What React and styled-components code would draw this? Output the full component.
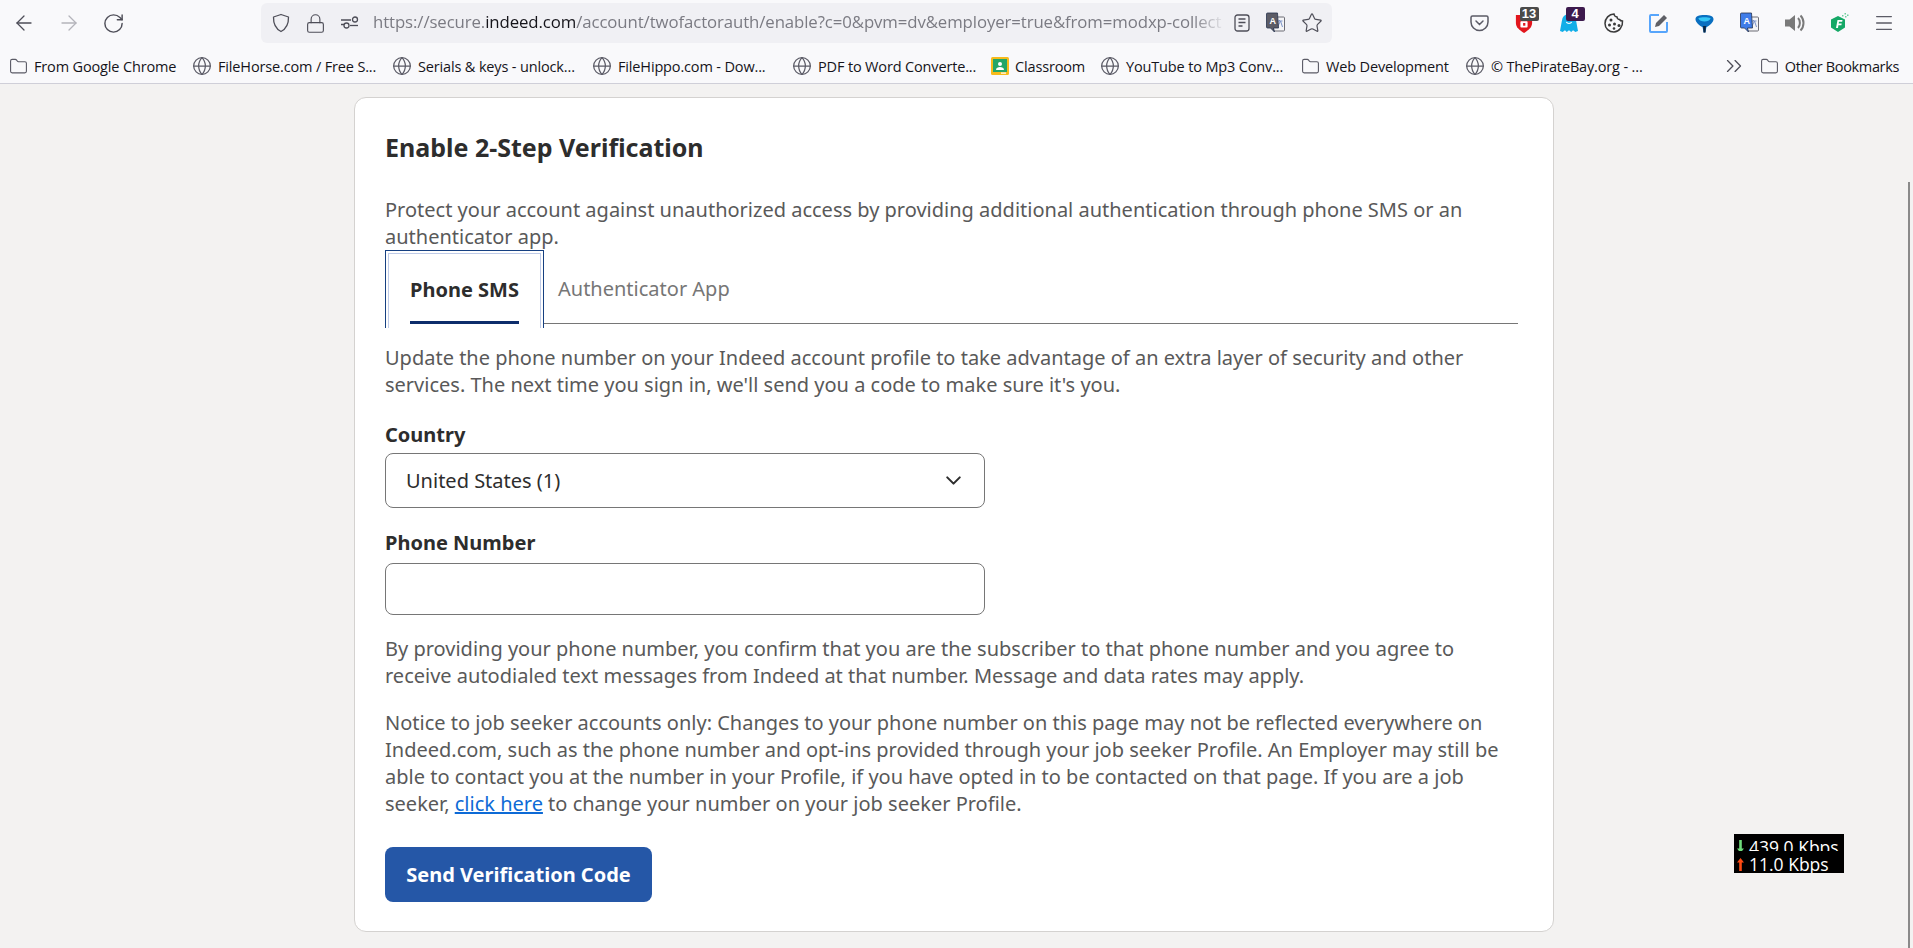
import React from "react"
import styled, { createGlobalStyle } from "styled-components"
import { ChevronDown, ChevronsRight, Folder, Globe, Lock, Menu, RotateCw, ArrowLeft, ArrowRight, Star } from "lucide-react"

const GlobalStyle = createGlobalStyle`
  html, body {
    margin: 0;
    padding: 0;
    height: 100%;
    overflow: hidden;
    background: #f3f2f1;
  }
  * { box-sizing: border-box; }
`

const bookmarks = [
  { label: "From Google Chrome", icon: "folder", width: 183 },
  { label: "FileHorse.com / Free S...", icon: "globe", width: 200 },
  { label: "Serials & keys - unlock...", icon: "globe", width: 200 },
  { label: "FileHippo.com - Dow...", icon: "globe", width: 200 },
  { label: "PDF to Word Converte...", icon: "globe", width: 199 },
  { label: "Classroom", icon: "classroom", width: 109 },
  { label: "YouTube to Mp3 Conv...", icon: "globe", width: 201 },
  { label: "Web Development", icon: "folder", width: 164 },
  { label: "© ThePirateBay.org - ...", icon: "globe", width: 200 },
]

function ClassroomIcon() {
  return (
    <svg width="18" height="18" viewBox="0 0 18 18">
      <rect width="18" height="18" rx="1.5" fill="#f7bb1b" />
      <rect x="2" y="2" width="14" height="13" fill="#25a667" />
      <circle cx="9" cy="7" r="2" fill="#fff" />
      <path d="M5 13c0-2.2 2-3 4-3s4 .8 4 3z" fill="#fff" />
      <rect x="10" y="15.5" width="5" height="1.2" fill="#fff" />
    </svg>
  )
}

function BookmarkIcon({ kind }) {
  if (kind === "folder") return <Folder size={19} strokeWidth={1.4} color="#5b5b66" />
  if (kind === "classroom") return <ClassroomIcon />
  return <Globe size={20} strokeWidth={1.5} color="#5b5b66" />
}

function TranslateIcon({ color }) {
  return (
    <svg width="21" height="22" viewBox="0 0 20 22">
      <rect x="8" y="5" width="11" height="14" rx="1" fill="#f4f4f6" stroke="#6d6d75" />
      <path d="M11 9h6M14 8v1M12 15l3-6 2 6" fill="none" stroke="#7b93c8" strokeWidth="1" />
      <path d="M2 1h10l1 15H8l1 4-4-4H2a1 1 0 0 1-1-1V2a1 1 0 0 1 1-1z" fill={color} stroke="#27344f" strokeWidth=".8" />
      <text x="4" y="12" fontSize="9" fontWeight="700" fontFamily="Liberation Sans, sans-serif" fill="#fff">A</text>
    </svg>
  )
}

function SpeedGlyph({ color, up }) {
  return (
    <svg width="7" height="13" viewBox="0 0 7 13">
      <path d={up ? "M3.500 0L7 4.500H4.800V13H2.200V4.500H0z" : "M3.500 13L7 8.500H4.800V0H2.200V8.500H0z"} fill={color} />
    </svg>
  )
}

export default function App() {
  return (
    <>
      <GlobalStyle />
      <Browser>
        <NavBar>
          <NavButtons>
            <ArrowLeft size={24} strokeWidth={1.3} color="#4e4e58" />
            <ArrowRight size={24} strokeWidth={1.3} color="#b4b4ba" />
            <RotateCw size={23} strokeWidth={1.5} color="#4e4e58" />
          </NavButtons>
          <UrlBar>
            <UrlIcons>
              <svg width="20" height="20" viewBox="0 0 20 20" fill="none" stroke="#4e4e58" strokeWidth="1.3">
                <path d="M10 1.500l7.500 2.500c.2 6.500-1.800 11.500-7.500 14.500C4.300 15.500 2.300 10.500 2.500 4z" strokeLinejoin="round" />
              </svg>
              <Lock size={21} strokeWidth={1.3} color="#4e4e58" />
              <svg width="20" height="16" viewBox="0 0 20 16" fill="none" stroke="#4e4e58" strokeWidth="1.3">
                <path d="M1 5h10M1 9.500h3" />
                <circle cx="15" cy="4.500" r="2.500" />
                <circle cx="6.500" cy="10.500" r="2.500" />
                <path d="M10 10.500h8" />
              </svg>
            </UrlIcons>
            <UrlText>
              https://secure.<strong>indeed.com</strong>/account/twofactorauth/enable?c=0&amp;pvm=dv&amp;employer=true&amp;from=modxp-collect
            </UrlText>
            <UrlActions>
              <svg width="16" height="18" viewBox="0 0 16 18" fill="none" stroke="#4e4e58" strokeWidth="1.3">
                <rect x="1" y="1" width="14" height="16" rx="2.500" />
                <path d="M4.500 5h7M4.500 8.500h7M4.500 12h4" />
              </svg>
              <TranslateIcon color="#5c5c66" />
              <Star size={22} strokeWidth={1.3} color="#4e4e58" />
            </UrlActions>
          </UrlBar>
          <Extensions>
            <ExtensionSlot>
              <svg width="19" height="18" viewBox="0 0 19 18" fill="none" stroke="#5b5b66" strokeWidth="1.500">
                <path d="M2.500 2h14a1.500 1.500 0 0 1 1.500 1.500V8a8.500 8.500 0 0 1-17 0V3.500A1.500 1.500 0 0 1 2.500 2z" />
                <path d="M6 7l3.500 3.500L13 7" strokeLinecap="round" />
              </svg>
            </ExtensionSlot>
            <ExtensionSlot>
              <svg width="18" height="22" viewBox="0 0 20 22">
                <path d="M1 2h18v9c0 5-4 8-9 11-5-3-9-6-9-11z" fill="#e2161d" />
                <rect x="6" y="9" width="8" height="7" rx="1" fill="#fff" />
                <rect x="9" y="11" width="2.500" height="3" fill="#e2161d" />
              </svg>
              <Badge $bg="#4a4a4a" $left={18}>13</Badge>
            </ExtensionSlot>
            <ExtensionSlot>
              <svg width="18" height="22" viewBox="0 0 20 22">
                <path d="M2 9a8 8 0 0 1 16 0l2 11-3 1-2.500-2-2 2-2.500-2-2.500 2-2-2-2.500 2-3-1z" fill="#12aee8" />
                <path d="M7 10c1 2 5 2 6 0" fill="none" stroke="#fff" strokeWidth="1.200" />
              </svg>
              <Badge $bg="#3d1a4d" $left={19}>4</Badge>
            </ExtensionSlot>
            <ExtensionSlot>
              <svg width="20" height="20" viewBox="0 0 20 20">
                <path d="M10 1c.3 2 1.500 2.800 3 3 .2 1.500 1 2.500 2.500 2.500.6 1 1.500 1.500 3 1.500.6 5.500-3.500 11-8.500 11S1 15.500 1 10.500 5 1 10 1z" fill="none" stroke="#3a3a3a" strokeWidth="1.500" />
                <circle cx="7" cy="7" r="1.500" fill="#3a3a3a" />
                <circle cx="5.500" cy="12" r="1.500" fill="#3a3a3a" />
                <circle cx="10.500" cy="11" r="1.500" fill="#3a3a3a" />
                <circle cx="10" cy="15.500" r="1.300" fill="#3a3a3a" />
                <circle cx="15" cy="12.500" r="1.500" fill="#3a3a3a" />
              </svg>
            </ExtensionSlot>
            <ExtensionSlot>
              <svg width="20" height="20" viewBox="0 0 20 20">
                <path d="M10 2H2a1 1 0 0 0-1 1v15a1 1 0 0 0 1 1h15a1 1 0 0 0 1-1v-9" fill="none" stroke="#57a5fb" strokeWidth="2" />
                <path d="M6 14l1-4 8-8 3 3-8 8z" fill="#5f6066" />
              </svg>
            </ExtensionSlot>
            <ExtensionSlot>
              <svg width="19" height="19" viewBox="0 0 20 20">
                <path d="M0.500 5.500C0.500 2 4 1 10 1s9.500 1 9.500 4.500c0 3-4 6.500-7.500 8.500l-1 5.500H9L8 14C4.500 12 .5 8.500.5 5.500z" fill="#0a6fc0" />
                <path d="M3.500 4.500c3-1.300 10-1.300 13 0-1 2.300-3.500 3.500-6.500 3.500S4.500 6.800 3.500 4.500z" fill="#35c6f5" />
                <path d="M8.500 12.500h3l-.500 7H9z" fill="#0d2540" />
              </svg>
            </ExtensionSlot>
            <ExtensionSlot>
              <TranslateIcon color="#3f7ce8" />
            </ExtensionSlot>
            <ExtensionSlot>
              <svg width="21" height="20" viewBox="0 0 21 20" fill="#7a7a7a">
                <path d="M1 6.500h4.500L11 2v16l-5.500-4.500H1z" />
                <path d="M14 5c2.500 2.500 2.500 7.500 0 10M16.500 2.500c4 4 4 11 0 15" fill="none" stroke="#7a7a7a" strokeWidth="2" />
              </svg>
            </ExtensionSlot>
            <ExtensionSlot>
              <svg width="20" height="22" viewBox="0 0 20 22">
                <path d="M9 4l7 3.500v8L9 20l-7-4.500v-8z" fill="#15a866" />
                <path d="M7 16l1.500-8h5l-.3 1.800H10l-.3 1.700h3l-.3 1.700h-3L9 16z" fill="#fff" />
                <g fill="#6fcf9f">
                  <rect x="13" y="3" width="1.500" height="1.500" />
                  <rect x="15.500" y="1" width="1.500" height="1.500" />
                  <rect x="16" y="4" width="1.500" height="1.500" />
                  <rect x="18" y="2.500" width="1.500" height="1.500" />
                </g>
              </svg>
            </ExtensionSlot>
            <ExtensionSlot>
              <Menu size={22} strokeWidth={1.500} color="#5b5b66" />
            </ExtensionSlot>
          </Extensions>
        </NavBar>
        <BookmarkBar>
          {bookmarks.map((item) => (
            <BookmarkItem key={item.label} $width={item.width}>
              <BookmarkIcon kind={item.icon} />
              <span>{item.label}</span>
            </BookmarkItem>
          ))}
          <OverflowChevrons>
            <ChevronsRight size={26} strokeWidth={1.200} color="#4e4e58" />
          </OverflowChevrons>
          <BookmarkItem $tight>
            <BookmarkIcon kind="folder" />
            <span>Other Bookmarks</span>
          </BookmarkItem>
        </BookmarkBar>
      </Browser>

      <Page>
        <Card>
          <Title>Enable 2-Step Verification</Title>
          <Intro>
            Protect your account against unauthorized access by providing additional authentication through phone SMS or an authenticator app.
          </Intro>
          <TabList>
            <Tab $active>
              <TabLabel $active>Phone SMS</TabLabel>
            </Tab>
            <Tab>
              <TabLabel>Authenticator App</TabLabel>
            </Tab>
          </TabList>
          <TabIntro>
            Update the phone number on your Indeed account profile to take advantage of an extra layer of security and other services. The next time you sign in, we'll send you a code to make sure it's you.
          </TabIntro>
          <FieldLabel>Country</FieldLabel>
          <SelectBox>
            <span>United States (1)</span>
            <ChevronDown size={25} strokeWidth={2} color="#2d2d2d" />
          </SelectBox>
          <FieldLabel $second>Phone Number</FieldLabel>
          <TextInput type="text" />
          <Consent>
            By providing your phone number, you confirm that you are the subscriber to that phone number and you agree to receive autodialed text messages from Indeed at that number. Message and data rates may apply.
          </Consent>
          <Notice>
            Notice to job seeker accounts only: Changes to your phone number on this page may not be reflected everywhere on Indeed.com, such as the phone number and opt-ins provided through your job seeker Profile. An Employer may still be able to contact you at the number in your Profile, if you have opted in to be contacted on that page. If you are a job seeker, <ProfileLink href="#">click here</ProfileLink> to change your number on your job seeker Profile.
          </Notice>
          <SendButton>Send Verification Code</SendButton>
        </Card>
      </Page>

      <ScrollThumb />
      <SpeedWidget>
        <SpeedRow $height={17}>
          <SpeedArrow $top={6}><SpeedGlyph color="#6fdc7c" /></SpeedArrow>
          439.0 Kbps
        </SpeedRow>
        <SpeedRow $height={22}>
          <SpeedArrow $top={7}><SpeedGlyph color="#ff4a12" up /></SpeedArrow>
          11.0 Kbps
        </SpeedRow>
      </SpeedWidget>
    </>
  )
}

const Browser = styled.header`
  height: 84px;
  background: #f9f9fb;
  border-bottom: 1px solid #cfcfd8;
  font-family: "Open Sans", sans-serif;
`

const NavBar = styled.div`
  height: 48px;
  padding-top: 3px;
  display: flex;
  align-items: flex-start;
`

const NavButtons = styled.div`
  width: 261px;
  height: 40px;
  padding-left: 12px;
  display: flex;
  align-items: center;
  gap: 21px;
`

const UrlBar = styled.div`
  width: 1071px;
  height: 40px;
  padding: 0 10px;
  display: flex;
  align-items: center;
  background: #f0f0f4;
  border-radius: 6px;
`

const UrlIcons = styled.div`
  display: flex;
  align-items: center;
  gap: 14px;
  width: 102px;
  flex: none;
`

const UrlText = styled.div`
  width: 853px;
  flex: none;
  overflow: hidden;
  white-space: nowrap;
  font-size: 16.8px;
  letter-spacing: -0.1px;
  line-height: 38px;
  height: 40px;
  color: #7b7b83;
  -webkit-mask-image: linear-gradient(to right, #000 96%, transparent);
  mask-image: linear-gradient(to right, #000 96%, transparent);

  strong {
    font-weight: 400;
    color: #15141a;
  }
`

const UrlActions = styled.div`
  display: flex;
  align-items: center;
  gap: 15px;
  margin-left: 8px;
`

const Extensions = styled.div`
  margin-left: 124.5px;
  height: 40px;
  display: flex;
  align-items: center;
`

const ExtensionSlot = styled.div`
  position: relative;
  width: 45px;
  height: 40px;
  display: flex;
  align-items: center;
  justify-content: center;
`

const Badge = styled.span`
  position: absolute;
  top: 4px;
  left: ${(props) => props.$left}px;
  width: 19px;
  height: 14px;
  border-radius: 2px;
  background: ${(props) => props.$bg};
  color: #fff;
  font: 700 13px/14px "Liberation Sans", sans-serif;
  text-align: center;
`

const BookmarkBar = styled.nav`
  height: 35px;
  padding-left: 9px;
  padding-right: 14px;
  display: flex;
  align-items: center;
`

const BookmarkItem = styled.div`
  width: ${(props) => (props.$width ? `${props.$width}px` : "auto")};
  flex: none;
  display: flex;
  align-items: center;
  gap: 6px;
  font-size: 14.5px;
  line-height: 21px;
  padding-top: 1px;
  letter-spacing: ${(props) => (props.$tight ? "-0.35px" : "-0.15px")};
  color: #15141a;
  white-space: nowrap;
`

const OverflowChevrons = styled.div`
  margin-left: auto;
  margin-right: 13px;
  display: flex;
`

const Page = styled.main`
  padding: 13px 5px 0 0;
  display: flex;
  justify-content: center;
  font-family: "Noto Sans", sans-serif;
`

const Card = styled.section`
  width: 1200px;
  padding: 0 35px 29px 30px;
  background: #fff;
  border: 1px solid #d4d2d0;
  border-radius: 12px;
`

const Title = styled.h1`
  margin: 31px 0 0;
  font-size: 25px;
  line-height: 36px;
  font-weight: 700;
  color: #2d2d2d;
`

const Intro = styled.p`
  margin: 31px 0 0;
  font-size: 20px;
  line-height: 27px;
  color: #595959;
`

const TabList = styled.div`
  position: relative;
  height: 78px;
  display: flex;
  overflow: hidden;

  &::after {
    content: "";
    position: absolute;
    left: 0;
    right: 0;
    bottom: 4px;
    height: 1px;
    background: #767676;
  }
`

const Tab = styled.button`
  position: relative;
  z-index: ${(props) => (props.$active ? 1 : 0)};
  height: 82px;
  width: ${(props) => (props.$active ? "159px" : "auto")};
  padding: 0 ${(props) => (props.$active ? "24px" : "14px")};
  background: ${(props) => (props.$active ? "#fff" : "transparent")};
  border: ${(props) => (props.$active ? "1px solid #164081" : "0")};
  box-shadow: ${(props) => (props.$active ? "inset 0 0 0 2px #fff, inset 0 0 0 3px #bfcbe8" : "none")};
  display: flex;
  align-items: flex-start;
  font-family: inherit;
`

const TabLabel = styled.span`
  display: block;
  height: 63px;
  margin-top: 2px;
  padding-top: 5px;
  font-size: 20px;
  line-height: 64px;
  white-space: nowrap;
  font-weight: ${(props) => (props.$active ? 700 : 400)};
  color: ${(props) => (props.$active ? "#2d2d2d" : "#767676")};
  border-bottom: ${(props) => (props.$active ? "3px solid #0d2d6b" : "0")};
  box-sizing: content-box;
`

const TabIntro = styled.p`
  margin: 16px 0 0;
  font-size: 20px;
  line-height: 27px;
  color: #595959;
`

const FieldLabel = styled.label`
  display: block;
  margin-top: ${(props) => (props.$second ? "21px" : "23px")};
  font-size: 20px;
  line-height: 27px;
  font-weight: 700;
  color: #2d2d2d;
`

const SelectBox = styled.div`
  margin-top: 5px;
  width: 600px;
  height: 55px;
  padding: 0 18px 0 20px;
  display: flex;
  align-items: center;
  justify-content: space-between;
  border: 1px solid #767676;
  border-radius: 8px;
  font-size: 20px;
  color: #2d2d2d;
`

const TextInput = styled.input`
  display: block;
  margin-top: 7px;
  width: 600px;
  height: 52px;
  border: 1px solid #767676;
  border-radius: 8px;
  background: #fff;
`

const Consent = styled.p`
  margin: 20px 0 0;
  font-size: 20px;
  line-height: 27px;
  color: #595959;
`

const Notice = styled.p`
  margin: 20px 0 0;
  font-size: 20px;
  line-height: 27px;
  color: #595959;
`

const ProfileLink = styled.a`
  color: #0d6ad6;
  text-decoration: underline;
`

const SendButton = styled.button`
  display: block;
  margin-top: 30px;
  width: 267px;
  height: 55px;
  background: #2557a7;
  border: 0;
  border-radius: 8px;
  color: #fff;
  font-family: inherit;
  font-size: 20px;
  font-weight: 700;
`

const ScrollThumb = styled.div`
  position: fixed;
  top: 182px;
  right: 3px;
  bottom: 0;
  width: 2px;
  background: #8a8a8a;
`

const SpeedWidget = styled.aside`
  position: fixed;
  left: 1734px;
  top: 834px;
  width: 110px;
  height: 39px;
  background: #000;
  color: #fff;
  font-family: "Open Sans", sans-serif;
  font-size: 17.5px;
`

const SpeedRow = styled.div`
  position: relative;
  height: ${(props) => props.$height}px;
  padding-left: 15px;
  overflow: hidden;
  line-height: 26px;
  white-space: nowrap;
`

const SpeedArrow = styled.span`
  position: absolute;
  left: 3px;
  top: ${(props) => props.$top}px;
  display: flex;
`
